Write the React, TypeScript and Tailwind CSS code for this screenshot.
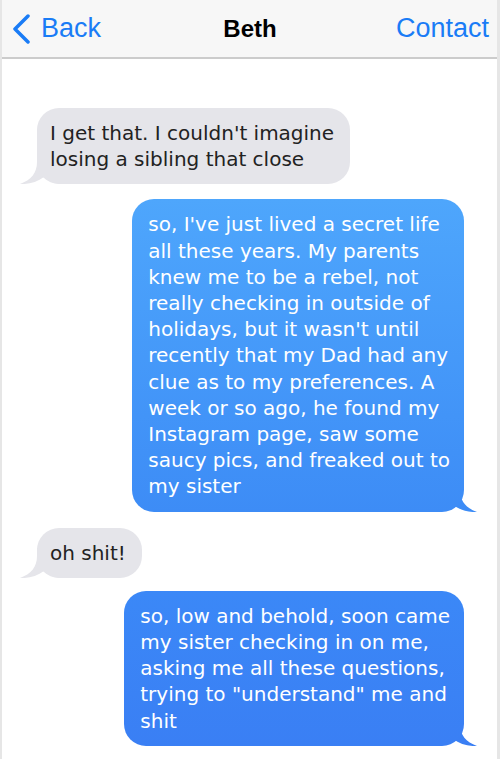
import React from 'react';

const font = { fontFamily: '"DejaVu Sans", Verdana, sans-serif' };

const Tail: React.FC<{ side: 'left' | 'right'; color: string }> = ({ side, color }) => (
  <svg
    width="40"
    height="30"
    viewBox="0 0 40 30"
    className={`absolute bottom-0 ${side === 'left' ? '-left-[17px]' : '-right-[13px] -scale-x-100'}`}
  >
    <path
      d="M17 0 L17 8 C17 19 11 26 0 30 C9 30.5 17 28 24 23 C28 27 33 29 40 30 L40 0 Z"
      fill={color}
    />
  </svg>
);

const Received: React.FC<{ lines: string[]; className?: string }> = ({ lines, className }) => (
  <div className={`relative self-start ml-[35px] ${className ?? ''}`}>
    <div className="relative z-10 bg-[#e5e5ea] text-[#222222] rounded-[22px] pl-[13px] pr-[16px] py-[12px] text-[20px] leading-[26.2px]" style={font}>
      {lines.map((l, i) => (
        <div key={i} className="whitespace-nowrap">{l}</div>
      ))}
    </div>
    <Tail side="left" color="#e5e5ea" />
  </div>
);

const Sent: React.FC<{ lines: string[]; className?: string; from: string; to: string; tail: string }> = ({ lines, className, from, to, tail }) => (
  <div className={`relative self-end mr-[33px] ${className ?? ''}`}>
    <div
      className={`relative z-10 text-white rounded-[22px] pl-[16px] pr-[14px] py-[12px] text-[20px] leading-[26.2px] bg-gradient-to-b ${from} ${to}`}
      style={font}
    >
      {lines.map((l, i) => (
        <div key={i} className="whitespace-nowrap">{l}</div>
      ))}
    </div>
    <Tail side="right" color={tail} />
  </div>
);

export default function App() {
  return (
    <div className="w-[500px] h-[759px] bg-white border-l-[2px] border-r-[3px] border-[#e6e6e6] overflow-hidden">
      <header className="h-[59px] bg-[#f7f7f7] border-b-2 border-[#cccccc] grid grid-cols-[1fr_auto_1fr] items-center pl-[9px] pr-[8px]" style={{ fontFamily: '"Liberation Sans", Arial, sans-serif' }}>
        <div className="flex items-center gap-[10px] text-[#1a7cf6] text-[27px]">
          <svg width="20" height="30" viewBox="0 0 20 30">
            <path d="M17 2 L4 15 L17 28" fill="none" stroke="#1a7cf6" strokeWidth="3.5" strokeLinecap="round" strokeLinejoin="round" />
          </svg>
          <span>Back</span>
        </div>
        <span className="text-[24px] font-bold text-black">Beth</span>
        <span className="text-[#1a7cf6] text-[27px] justify-self-end">Contact</span>
      </header>

      <main className="flex flex-col">
        <Received className="mt-[49px]" lines={["I get that. I couldn't imagine", 'losing a sibling that close']} />
        <Sent
          className="mt-[15px]"
          from="from-[#4ea6fc]"
          to="to-[#3d8cf6]"
          tail="#3d8cf6"
          lines={[
            "so, I've just lived a secret life",
            'all these years. My parents',
            'knew me to be a rebel, not',
            'really checking in outside of',
            "holidays, but it wasn't until",
            'recently that my Dad had any',
            'clue as to my preferences. A',
            'week or so ago, he found my',
            'Instagram page, saw some',
            'saucy pics, and freaked out to',
            'my sister',
          ]}
        />
        <Received className="mt-[16px]" lines={['oh shit!']} />
        <Sent
          className="mt-[13px]"
          from="from-[#3b88f7]"
          to="to-[#3a7ff4]"
          tail="#3a7ff4"
          lines={[
            'so, low and behold, soon came',
            'my sister checking in on me,',
            'asking me all these questions,',
            'trying to "understand" me and',
            'shit',
          ]}
        />
      </main>
    </div>
  );
}
